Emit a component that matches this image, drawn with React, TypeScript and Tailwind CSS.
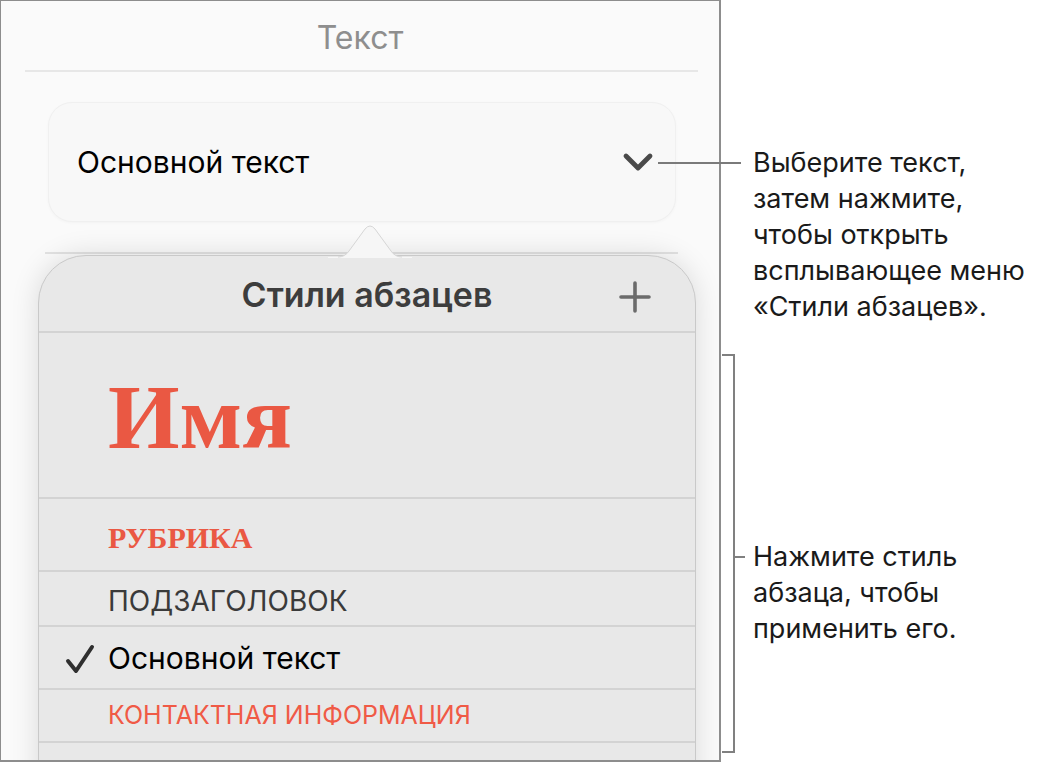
import React from "react";

const ui = { fontFamily: 'Inter, "Noto Sans", sans-serif' };
const serif = { fontFamily: '"Liberation Serif", "Times New Roman", serif' };

function Row({ h, children }: { h: string; children: React.ReactNode }) {
  return (
    <div className={`${h} shrink-0 border-t-2 border-[#d3d3d3] flex items-center pl-[69px] relative`}>
      {children}
    </div>
  );
}

export default function App() {
  return (
    <div className="w-[1053px] h-[763px] bg-white relative overflow-hidden flex">
      {/* Left panel */}
      <div className="w-[721px] h-[762px] shrink-0 bg-[#fafafa] border-l border-t border-r-2 border-b-2 border-[#8d8d8d] overflow-hidden flex flex-col">
        <div className="h-[69px] shrink-0 flex items-center justify-center pt-[4px]">
          <span style={ui} className="text-[32px] text-[#8e8e8e] leading-none">Текст</span>
        </div>
        <div className="ml-[24px] w-[673px] h-[2px] shrink-0 bg-[#e7e7e7]" />
        <div className="ml-[47px] mt-[30px] w-[628px] h-[120px] shrink-0 rounded-[24px] bg-[#f8f8f8] border border-[#f0f0f0] shadow-[0_1px_3px_rgba(0,0,0,0.03)] flex items-center justify-between pl-[28px] pr-[21px]">
          <span style={ui} className="text-[30px] text-black leading-none">Основной текст</span>
          <svg width="32" height="20" viewBox="0 0 32 20">
            <polyline points="4,4 16,16 28,4" fill="none" stroke="#4a4a4a" strokeWidth="4.8" strokeLinecap="round" strokeLinejoin="round" />
          </svg>
        </div>
        <div className="ml-[44px] mt-[30px] w-[633px] h-[2px] shrink-0 bg-[#e2e2e2]" />
        <div className="ml-[37px] mt-[1px] w-[658px] h-[560px] shrink-0 relative">
          {/* arrow */}
          <svg className="absolute left-[290px] top-[-31px]" width="84" height="34" viewBox="0 0 84 34">
            <path d="M0,33 L10,33 Q17,33 21,27 L37,5 Q42,-1 47,5 L63,27 Q67,33 74,33 L84,33 L84,34 L0,34 Z" fill="#f6f6f6" />
            <path d="M10,33 Q17,33 21,27 L37,5 Q42,-1 47,5 L63,27 Q67,33 74,33" fill="none" stroke="#d6d6d6" strokeWidth="1" />
          </svg>
          <div className="h-full bg-[#e8e8e8] rounded-t-[48px] border border-[#c9c9c9] shadow-[0_0_28px_rgba(0,0,0,0.13)] flex flex-col overflow-hidden">
            <div className="h-[75px] flex items-center justify-center relative shrink-0">
              <span style={ui} className="text-[34px] font-semibold text-[#3d3d3d] leading-none pt-[2px]">Стили абзацев</span>
              <svg className="absolute right-[44px] top-[25px]" width="32" height="32" viewBox="0 0 32 32">
                <path d="M16 2 V30 M2 16 H30" stroke="#6b6b6b" strokeWidth="3.6" strokeLinecap="round" />
              </svg>
            </div>
            <Row h="h-[166px]">
              <span style={serif} className="text-[92px] font-bold text-[#ea5843] leading-none pt-[4px]">Имя</span>
            </Row>
            <Row h="h-[73px]">
              <span style={serif} className="text-[30px] font-bold text-[#ea5843] leading-none pt-[6px]">РУБРИКА</span>
            </Row>
            <Row h="h-[55px]">
              <span style={ui} className="text-[28px] text-[#3a3a3a] leading-none pt-[4px]">ПОДЗАГОЛОВОК</span>
            </Row>
            <Row h="h-[63px]">
              <svg className="absolute left-[26px] top-[17px]" width="30" height="30" viewBox="0 0 30 30">
                <path d="M3 17 L11 27 L27 3" fill="none" stroke="#2f2f2f" strokeWidth="4" strokeLinecap="round" strokeLinejoin="round" />
              </svg>
              <span style={ui} className="text-[30px] text-black leading-none">Основной текст</span>
            </Row>
            <Row h="h-[53px]">
              <span style={ui} className="text-[25px] text-[#f05a46] leading-none">КОНТАКТНАЯ ИНФОРМАЦИЯ</span>
            </Row>
            <Row h="h-[60px]">
              <span />
            </Row>
          </div>
        </div>
      </div>

      {/* Right annotation column */}
      <div className="flex-1 flex flex-col pl-[32px]">
        <div style={ui} className="mt-[145px] text-[27px] leading-[36px] text-[#1a1a1a]">
          <div>Выберите текст,</div>
          <div>затем нажмите,</div>
          <div>чтобы открыть</div>
          <div>всплывающее меню</div>
          <div>«Стили абзацев».</div>
        </div>
        <div style={ui} className="mt-[214px] text-[27px] leading-[36px] text-[#1a1a1a]">
          <div>Нажмите стиль</div>
          <div>абзаца, чтобы</div>
          <div>применить его.</div>
        </div>
      </div>

      {/* callout lines */}
      <div className="absolute left-[658px] top-[162px] w-[83px] h-[2px] bg-[#7a7a7a]" />
      <div className="absolute left-[722px] top-[354px] w-[13px] h-[399px] border-t-2 border-b-2 border-r-2 border-[#808080]" />
      <div className="absolute left-[735px] top-[556px] w-[10px] h-[2px] bg-[#808080]" />
    </div>
  );
}
